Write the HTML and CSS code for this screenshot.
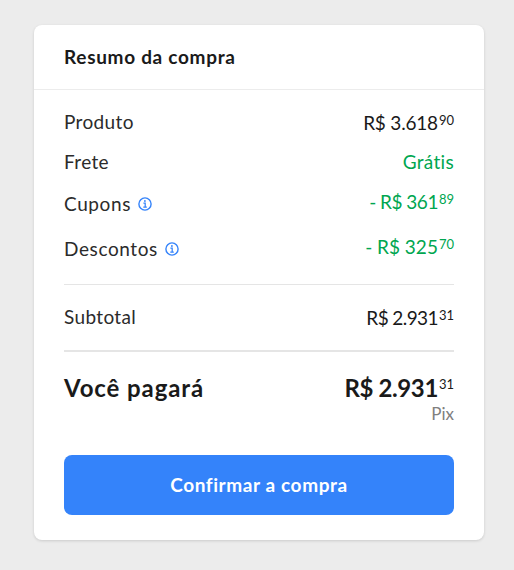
FILE: index.html
```html
<!DOCTYPE html>
<html lang="pt-BR">
<head>
  <meta charset="UTF-8" />
  <meta name="viewport" content="width=device-width, initial-scale=1" />
  <title>Resumo da compra</title>
  <link rel="stylesheet" href="styles.css">
</head>
<body>

  <main class="resumo">
    <h1 class="titulo">Resumo da compra</h1>

    <div class="conteudo">
      <div class="linha produto">
        <span class="rotulo">Produto</span>
        <span class="valor">R$ 3.618<sup>90</sup></span>
      </div>
      <div class="linha frete">
        <span class="rotulo">Frete</span>
        <span class="valor verde">Grátis</span>
      </div>
      <div class="linha cupons">
        <span class="rotulo">Cupons</span>
        <svg class="info" viewBox="0 0 14 14" fill="none">
          <circle cx="7" cy="7" r="6.1" stroke="#3483fa" stroke-width="1.4" />
          <path d="M5.4 6.2h1.8v3.9M5.3 10.1h3.5" stroke="#3483fa" stroke-width="1.25" />
          <circle cx="6.9" cy="4" r=".9" fill="#3483fa" />
        </svg>
        <span class="valor verde">- R$ 361<sup>89</sup></span>
      </div>
      <div class="linha descontos">
        <span class="rotulo">Descontos</span>
        <svg class="info" viewBox="0 0 14 14" fill="none">
          <circle cx="7" cy="7" r="6.1" stroke="#3483fa" stroke-width="1.4" />
          <path d="M5.4 6.2h1.8v3.9M5.3 10.1h3.5" stroke="#3483fa" stroke-width="1.25" />
          <circle cx="6.9" cy="4" r=".9" fill="#3483fa" />
        </svg>
        <span class="valor verde">- R$ 325<sup>70</sup></span>
      </div>
      <div class="linha subtotal">
        <span class="rotulo">Subtotal</span>
        <span class="valor">R$ 2.931<sup>31</sup></span>
      </div>
      <div class="linha total">
        <span class="rotulo">Você pagará</span>
        <span class="valor">R$ 2.931<sup>31</sup></span>
      </div>
      <p class="pagamento">Pix</p>
      <button class="confirmar" type="button">Confirmar a compra</button>
    </div>
  </main>

</body>
</html>
```
FILE: styles.css
```css
* {
  box-sizing: border-box;
}
body {
  margin: 0;
  padding: 25px 30px 30px 34px;
  background: #ececec;
  color: #1a1a1a;
  font-family: Lato, 'Liberation Sans', sans-serif;
  font-size: 19px;
  line-height: 24px;
}
.resumo {
  width: 450px;
  height: 515px;
  background: #fff;
  border-radius: 8px;
  box-shadow: 0 1px 3px rgba(0, 0, 0, 0.14);
}
.titulo {
  margin: 0;
  height: 65px;
  padding: 20px 30px 0;
  border-bottom: 1px solid #ececec;
  font-size: 19px;
  font-weight: 700;
  letter-spacing: 0.7px;
}
.conteudo {
  padding: 20px 30px 0;
}
.linha {
  display: flex;
  align-items: flex-start;
}
.rotulo {
  color: #2b2b2b;
  letter-spacing: 0.35px;
}
.valor {
  margin-left: auto;
  white-space: nowrap;
}
.valor sup {
  display: inline-block;
  margin-left: 1px;
  font-size: 13px;
  font-weight: 400;
  letter-spacing: 0;
  line-height: 1;
  vertical-align: 5px;
}
.verde {
  color: #00a650;
}
.info {
  width: 14px;
  height: 14px;
  margin: 7px 0 0 7px;
}
.produto {
  height: 40px;
}
.produto .valor,
.subtotal .valor {
  padding-top: 1px;
}
.produto .valor {
  letter-spacing: -0.2px;
}
.frete {
  height: 40px;
}
.frete .valor {
  letter-spacing: 0.3px;
}
.cupons {
  height: 45px;
}
.cupons .rotulo,
.descontos .rotulo {
  padding-top: 2px;
  letter-spacing: 0.6px;
}
.cupons .valor {
  letter-spacing: -0.5px;
}
.descontos {
  height: 49px;
}
.subtotal {
  height: 68px;
  padding-top: 20px;
  border-top: 1px solid #e5e5e5;
  border-bottom: 2px solid #e5e5e5;
}
.subtotal .valor {
  letter-spacing: -0.6px;
}
.total {
  height: 50px;
  padding-top: 21px;
  font-size: 24px;
  font-weight: 700;
  line-height: 30px;
}
.total .rotulo {
  color: #1a1a1a;
  letter-spacing: 0.9px;
}
.total .valor {
  letter-spacing: -0.4px;
}
.total .valor sup {
  vertical-align: 8px;
}
.pagamento {
  margin: 0 0 29px;
  color: #808080;
  font-size: 17px;
  text-align: right;
}
.confirmar {
  display: block;
  width: 100%;
  height: 60px;
  padding: 0;
  border: 0;
  border-radius: 8px;
  background: #3483fa;
  color: #fff;
  font: 700 19px/24px Lato, 'Liberation Sans', sans-serif;
  letter-spacing: 0.6px;
  cursor: pointer;
}
```
